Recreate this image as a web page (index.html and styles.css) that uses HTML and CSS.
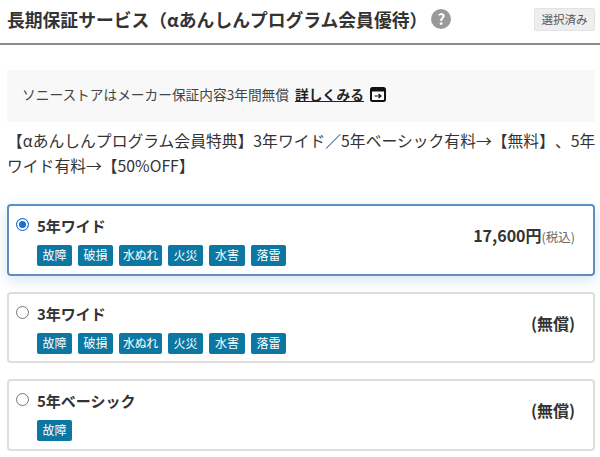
FILE: index.html
```html
<!DOCTYPE html>
<html lang="ja">
<head>
    <meta charset="UTF-8">
    <meta name="viewport" content="width=device-width, initial-scale=1.0">
    <title>長期保証サービス</title>
    <link rel="stylesheet" href="styles.css">
</head>
<body>
    <div class="head">
        <h2 class="head-title">長期保証サービス（αあんしんプログラム会員優待）</h2>
        <span class="help">?</span>
        <span class="done">選択済み</span>
    </div>

    <div class="notice">
        <span>ソニーストアはメーカー保証内容3年間無償</span>
        <a class="more" href="#">詳しくみる</a>
        <svg class="popup" width="16" height="15" viewBox="0 0 16 15">
            <rect x="1" y="1" width="14" height="13" rx="1.5" fill="#fff" stroke="#111" stroke-width="2"/>
            <rect x="1" y="1" width="14" height="3.5" fill="#111"/>
            <path d="M4.5 9h6M8.5 7l2.5 2-2.5 2" fill="none" stroke="#111" stroke-width="1.2"/>
        </svg>
    </div>

    <p class="lead">【αあんしんプログラム会員特典】3年ワイド／5年ベーシック有料→【無料】、5年ワイド有料→【50%OFF】</p>

    <div class="plans">
        <label class="plan selected">
            <span class="radio"></span>
            <div class="plan-body">
                <div class="plan-name">5年ワイド</div>
                <div class="tags">
                    <span class="tag">故障</span>
                    <span class="tag">破損</span>
                    <span class="tag tag-long">水ぬれ</span>
                    <span class="tag">火災</span>
                    <span class="tag tag-mid">水害</span>
                    <span class="tag">落雷</span>
                </div>
            </div>
            <div class="price">17,600円<small>(税込)</small></div>
        </label>

        <label class="plan">
            <span class="radio"></span>
            <div class="plan-body">
                <div class="plan-name">3年ワイド</div>
                <div class="tags">
                    <span class="tag">故障</span>
                    <span class="tag">破損</span>
                    <span class="tag tag-long">水ぬれ</span>
                    <span class="tag">火災</span>
                    <span class="tag tag-mid">水害</span>
                    <span class="tag">落雷</span>
                </div>
            </div>
            <div class="price">(無償)</div>
        </label>

        <label class="plan">
            <span class="radio"></span>
            <div class="plan-body">
                <div class="plan-name">5年ベーシック</div>
                <div class="tags">
                    <span class="tag">故障</span>
                </div>
            </div>
            <div class="price">(無償)</div>
        </label>
    </div>
</body>
</html>
```

FILE: styles.css
```css
* {
    margin: 0;
    padding: 0;
    box-sizing: border-box;
}

body {
    background: #fff;
    color: #333;
    font-family: "Noto Sans CJK JP", "Noto Sans", sans-serif;
    overflow: hidden;
}

.head {
    height: 45px;
    display: flex;
    align-items: center;
    padding: 0 5px 5px 7px;
    border-bottom: 2px solid #8c8c8c;
}

.head-title {
    font-size: 17.8px;
    font-weight: 700;
    line-height: 24px;
    white-space: nowrap;
}

.help {
    width: 20px;
    height: 20px;
    margin-left: 4px;
    border-radius: 50%;
    background: #999;
    color: #fff;
    font-size: 15px;
    font-weight: 700;
    line-height: 20px;
    text-align: center;
}

.done {
    margin-left: auto;
    width: 61px;
    height: 23px;
    background: #eee;
    border: 1px solid #e2e2e2;
    border-radius: 2px;
    color: #555;
    font-size: 11.5px;
    line-height: 21px;
    text-align: center;
}

.notice {
    height: 52px;
    margin: 25px 5px 0 7px;
    padding: 0 0 4px 15px;
    display: flex;
    align-items: center;
    background: #f8f8f8;
    font-size: 13.7px;
    color: #444;
}

.more {
    margin-left: 6px;
    color: #222;
    font-weight: 700;
    text-decoration: underline;
}

.popup {
    margin-left: 6px;
}

.lead {
    margin: 6px 2px 0 7px;
    font-size: 15.8px;
    line-height: 25px;
    text-spacing-trim: space-all;
}

.plans {
    margin: 26px 5px 0 7px;
    display: flex;
    flex-direction: column;
    gap: 16px;
}

.plan {
    height: 71.5px;
    display: flex;
    padding: 11px 18px 0 7px;
    background: #fff;
    border: 2px solid #ddd;
    border-radius: 4px;
}

.plan.selected {
    border-color: #5f8fbd;
    box-shadow: 0 4px 14px rgba(90, 150, 220, .25);
}

.radio {
    width: 13px;
    height: 13px;
    margin-top: 1px;
    border: 1px solid #777;
    border-radius: 50%;
    background: #fff;
    flex-shrink: 0;
}

.selected .radio {
    border: 1px solid #1a6fd0;
    background: #1a6fd0;
    box-shadow: inset 0 0 0 2px #fff;
}

.plan-body {
    margin-left: 8px;
    flex: 1;
}

.plan-name {
    font-size: 15px;
    font-weight: 700;
    line-height: 18px;
    color: #333;
}

.tags {
    display: flex;
    gap: 6px;
    margin-top: 10px;
}

.tag {
    width: 35px;
    height: 21px;
    background: #0b77a3;
    border-radius: 2px;
    color: #fff;
    font-size: 12px;
    line-height: 20px;
    text-align: center;
}

.tag-mid {
    width: 36px;
}

.tag-long {
    width: 43px;
    letter-spacing: -.4px;
}

.price {
    margin-top: 8px;
    font-size: 16px;
    font-weight: 700;
    line-height: 20px;
    white-space: nowrap;
}

.price small {
    font-size: 12.5px;
    font-weight: 400;
    color: #666;
}
```
